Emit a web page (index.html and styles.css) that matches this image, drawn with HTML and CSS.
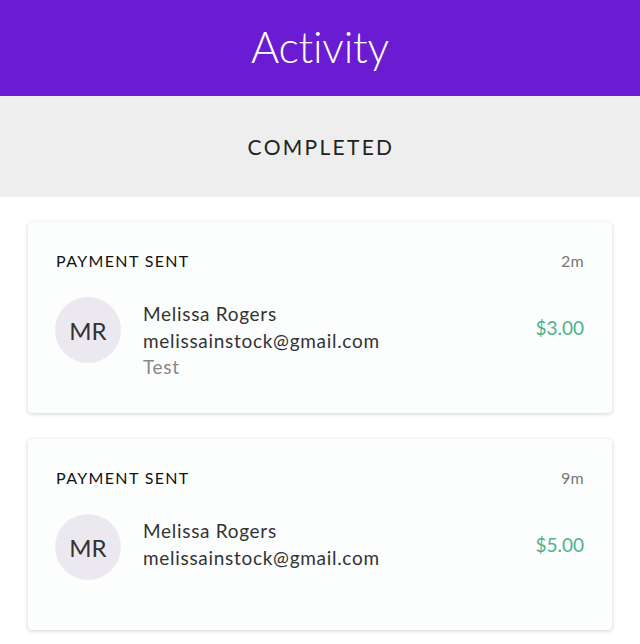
FILE: index.html
```html
<!DOCTYPE html>
<html>
<head>
<meta charset="utf-8">
<link rel="stylesheet" href="styles.css">
</head>
<body>
<header class="topbar"><h1 class="title">Activity</h1></header>
<div class="tabbar"><span class="tab">COMPLETED</span></div>
<main class="list">
  <section class="card">
    <div class="card-head"><span class="type">PAYMENT SENT</span><span class="time">2m</span></div>
    <div class="card-body">
      <div class="avatar">MR</div>
      <div class="info">
        <div class="name">Melissa Rogers</div>
        <div class="email">melissainstock@gmail.com</div>
        <div class="note">Test</div>
      </div>
      <div class="amount">$3.00</div>
    </div>
  </section>
  <section class="card">
    <div class="card-head"><span class="type">PAYMENT SENT</span><span class="time">9m</span></div>
    <div class="card-body">
      <div class="avatar">MR</div>
      <div class="info">
        <div class="name">Melissa Rogers</div>
        <div class="email">melissainstock@gmail.com</div>
      </div>
      <div class="amount">$5.00</div>
    </div>
  </section>
</main>
</body>
</html>
```
FILE: styles.css
```css
* { box-sizing: border-box; }
html, body { margin: 0; padding: 0; }
body {
  width: 640px;
  height: 644px;
  overflow: hidden;
  background: #ffffff;
  font-family: Lato, "Noto Sans", sans-serif;
  color: #222;
}
.topbar {
  height: 96px;
  background: #6a1cd3;
  display: flex;
  align-items: center;
  justify-content: center;
}
.title {
  margin: 0;
  color: #fff;
  font-weight: 300;
  font-size: 43px;
  letter-spacing: -0.2px;
  padding-bottom: 4px;
}
.tabbar {
  height: 101px;
  background: #eeeeee;
  display: flex;
  align-items: center;
  justify-content: center;
}
.tab {
  font-size: 21px;
  letter-spacing: 2.3px;
  color: #222;
  font-weight: 400;
  padding-left: 2px;
}
.list {
  padding: 25px 28px 0 28px;
  display: flex;
  flex-direction: column;
  gap: 26px;
}
.card {
  height: 191px;
  background: #fcfdfd;
  border-radius: 4px;
  box-shadow: 0 1px 4px rgba(0,0,0,0.18);
  padding: 28px 28px 0 27px;
}
.card-head {
  display: flex;
  justify-content: space-between;
  align-items: center;
  height: 20px;
  padding-left: 1px;
}
.type {
  font-size: 16px;
  letter-spacing: 1.35px;
  color: #111;
}
.time {
  font-size: 16px;
  color: #777;
  letter-spacing: 0.3px;
}
.card-body {
  display: flex;
  align-items: flex-start;
  margin-top: 26px;
}
.avatar {
  width: 66px;
  height: 66px;
  border-radius: 50%;
  background: #ece8ef;
  display: flex;
  align-items: center;
  justify-content: center;
  font-size: 24px;
  color: #333;
  font-weight: 400;
  margin-top: 1px;
  flex: none;
}
.info {
  margin-left: 22px;
  margin-top: 5px;
  flex: 1;
  font-size: 19px;
  line-height: 26.5px;
  letter-spacing: 0.7px;
  color: #333;
}
.note { color: #888; }
.amount {
  font-size: 19px;
  color: #4cb38c;
  margin-top: 20px;
  letter-spacing: 0;
}
```
